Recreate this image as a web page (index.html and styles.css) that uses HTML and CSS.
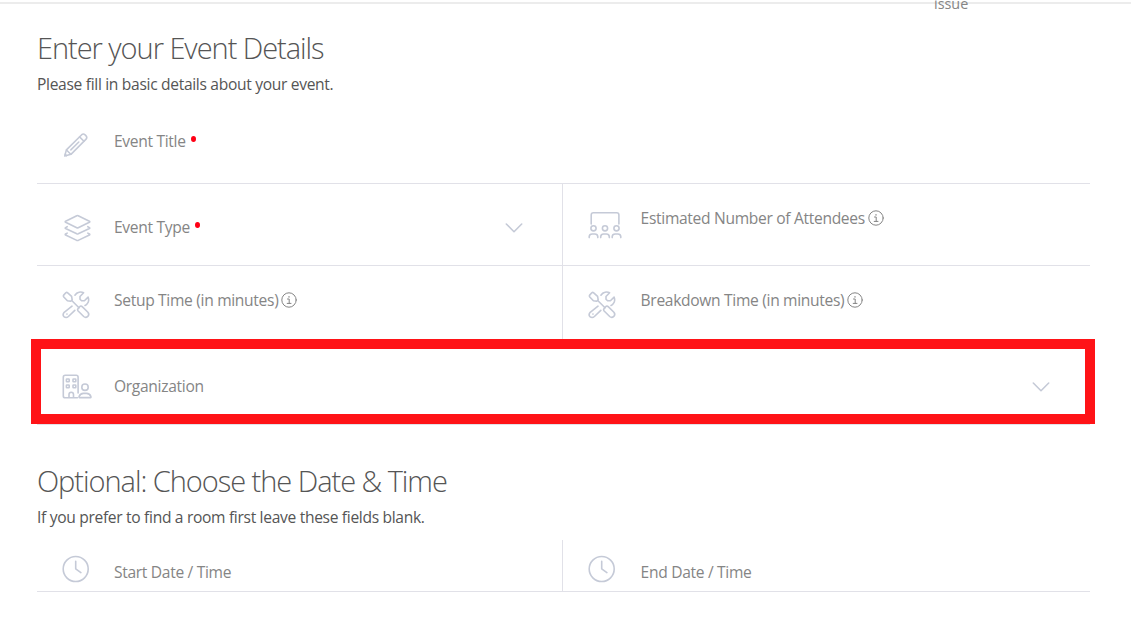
FILE: index.html
```html
<!DOCTYPE html>
<html lang="en">
<head>
  <meta charset="UTF-8" />
  <meta name="viewport" content="width=device-width, initial-scale=1.0" />
  <title>Event Details</title>
  <link rel="stylesheet" href="styles.css">
</head>
<body>
  <!-- shared icons -->
  <svg class="sprite" width="0" height="0">
    <symbol id="tools" viewBox="0.6 0 34 32">
      <path d="M2.5 4.9 4.4 2.8Q5.3 2 6.3 2.8L10.2 6.4 10.8 9.8 9.3 11.3 6 10.8 2.4 7Q1.6 5.9 2.5 4.9Z" />
      <path d="M10.3 10.5 17.6 17.8" />
      <path d="M17 18.1 18.8 16.3Q19.8 15.7 20.8 16.6L26.5 22.3Q28.3 24.4 26.4 26.4 24.3 28.3 22.3 26.5L16.5 20.8Q15.6 19.5 17 18.1Z" />
      <path d="M10.6 16.2 2.8 22.3Q.8 24.5 2.5 26.6 4.8 28.5 7 26.5L13.4 20.4" />
      <path d="M13.5 5.2Q15.2 2.7 17.5 2.2 20 1.5 22.2 2.7L18.6 6.5V9.2L20.2 10.8H23L26.7 7.1Q28.2 11 25.8 13.8 24.8 15 23.6 15.5" />
      <path d="M5.5 24.1h.1" />
    </symbol>
    <symbol id="clock" viewBox="0.3 0 34 32">
      <circle cx="14" cy="15" r="12.5" />
      <path d="M14 7.3V14.8L19.2 18.6" />
    </symbol>
    <symbol id="info" viewBox="0 0 16 16">
      <circle cx="8" cy="8" r="7.2" />
      <path d="M6.5 7H8.2V11.4M6.2 11.4H10M8 4.4V5.3" />
    </symbol>
    <symbol id="chevron" viewBox="0 0 18 12">
      <path d="M1.3 2 9 9.7 16.7 2" />
    </symbol>
  </svg>

  <header class="topbar">
    <span class="topbar-link">issue</span>
  </header>

  <main class="container">
    <section class="details">
      <h1>Enter your Event Details</h1>
      <p class="intro">Please fill in basic details about your event.</p>

      <div class="row row-title">
        <div class="field">
          <svg class="icon" viewBox="0.2 0.2 35 33">
            <path d="M3 26 4.7 19.7 20.5 4Q22.2 2.5 24 4.2L24.8 5Q26.6 6.8 25 8.6L9.4 24.3Z" />
            <path d="M4.8 19.8 9.2 24.2M18.3 6.3 22.8 10.7M9.3 19.7 17.5 11.6M3.4 24.2 4.8 25.6" />
          </svg>
          <label>Event Title <span class="required"></span></label>
        </div>
      </div>

      <div class="row row-type">
        <div class="field field-select">
          <svg class="icon" viewBox="0 -0.6 34 32">
            <path d="M3.6 7.6 14.8 2.1Q15.5 1.8 16.2 2.1L27.4 7.6Q28.2 8.1 27.4 8.6L16.2 14.1Q15.5 14.4 14.8 14.1L3.6 8.6Q2.8 8.1 3.6 7.6Z" />
            <path d="M5.2 13.1 3.6 14Q2.8 14.5 3.6 15L14.8 20.2Q15.5 20.5 16.2 20.2L27.4 15Q28.2 14.5 27.4 14L25.8 13.1" />
            <path d="M5.2 19.5 3.6 20.4Q2.8 20.9 3.6 21.4L14.8 26.8Q15.5 27.1 16.2 26.8L27.4 21.4Q28.2 20.9 27.4 20.4L25.8 19.5" />
          </svg>
          <label>Event Type <span class="required"></span></label>
          <svg class="chevron"><use href="#chevron" /></svg>
        </div>
        <div class="field">
          <svg class="icon icon-people" viewBox="0.5 0 34 32">
            <path d="M3.7 13V4Q3.7 1.8 5.9 1.8H29.2Q31.4 1.8 31.4 4V13" />
            <circle cx="6" cy="17.3" r="2.6" />
            <circle cx="17.5" cy="17.3" r="2.6" />
            <circle cx="29" cy="17.3" r="2.6" />
            <path d="M1.7 26.6V25.6Q2 23 4.6 23H7.4Q10 23 10.3 25.6V26.6M13.2 26.6V25.6Q13.5 23 16.1 23H18.9Q21.5 23 21.8 25.6V26.6M24.7 26.6V25.6Q25 23 27.6 23H30.4Q33 23 33.3 25.6V26.6" />
          </svg>
          <label>Estimated Number of Attendees <svg class="info"><use href="#info" /></svg></label>
        </div>
      </div>

      <div class="row row-time">
        <div class="field">
          <svg class="icon"><use href="#tools" /></svg>
          <label>Setup Time (in minutes) <svg class="info"><use href="#info" /></svg></label>
        </div>
        <div class="field">
          <svg class="icon"><use href="#tools" /></svg>
          <label>Breakdown Time (in minutes) <svg class="info"><use href="#info" /></svg></label>
        </div>
      </div>

      <div class="highlight">
        <div class="field field-select">
          <svg class="icon" viewBox="0 0 34 32">
            <path d="M15.4 24.8H3.2Q1.3 24.8 1.3 22.9V4.2Q1.3 2.3 3.2 2.3H14.2Q16.1 2.3 16.1 4.2V20M7 24.6V21.6Q7 19.2 9.2 19.2 11.5 19.2 11.5 21.6V24.6" />
            <rect x="4.4" y="6" width="2.8" height="2.8" rx=".5" />
            <rect x="11" y="6" width="2.8" height="2.8" rx=".5" />
            <rect x="4.4" y="12" width="2.8" height="2.8" rx=".5" />
            <rect x="11" y="12" width="2.8" height="2.8" rx=".5" />
            <circle cx="23" cy="14.2" r="3.2" />
            <path d="M17.5 24.6Q16.9 24.6 17.1 23.6 18.2 20.4 21.4 20.4H24.6Q27.8 20.4 28.9 23.6 29.1 24.6 28.5 24.6Z" />
          </svg>
          <label>Organization</label>
          <svg class="chevron"><use href="#chevron" /></svg>
        </div>
      </div>
      <div class="underline"></div>
    </section>

    <section class="schedule">
      <h2>Optional: Choose the Date &amp; Time</h2>
      <p class="intro">If you prefer to find a room first leave these fields blank.</p>

      <div class="row row-date">
        <div class="field">
          <svg class="icon"><use href="#clock" /></svg>
          <label>Start Date / Time</label>
        </div>
        <div class="field">
          <svg class="icon"><use href="#clock" /></svg>
          <label>End Date / Time</label>
        </div>
      </div>
    </section>
  </main>
</body>
</html>
```
FILE: styles.css
```css
* {
  box-sizing: border-box;
}

body {
  font-family: 'Open Sans', sans-serif;
  margin: 0;
  background-color: #fff;
  color: #555;
  font-size: 15.6px;
  line-height: 20px;
  letter-spacing: -0.32px;
  overflow: hidden;
}

.sprite {
  display: block;
}

.topbar {
  height: 4px;
  border-bottom: 2px solid #ececec;
  display: flex;
  align-items: flex-end;
  padding-left: 934px;
}

.topbar-link {
  font-size: 14.4px;
  letter-spacing: 0;
  color: #858585;
  margin-bottom: -12px;
}

.container {
  width: 1053px;
  margin-left: 37px;
  padding-top: 24px;
}

h1, h2 {
  margin: 0;
  font-size: 29px;
  font-weight: 300;
  line-height: 40px;
  letter-spacing: -1.04px;
}

.intro {
  margin: 6px 0 0;
}

.row {
  display: grid;
  grid-template-columns: 526px 1fr;
  border-bottom: 1px solid #e1e1e8;
}

.field {
  display: flex;
  align-items: flex-start;
  padding-left: 25px;
}

.row .field:first-child:not(:last-child) {
  border-right: 1px solid #e1e1e8;
}

.icon {
  width: 34px;
  height: 32px;
  margin-right: 18px;
  flex: none;
}

.field + .field .icon {
  margin-right: 18.6px;
}

svg {
  fill: none;
  stroke: #c5cad7;
  stroke-width: 1.6;
  stroke-linecap: round;
  stroke-linejoin: round;
}

label {
  color: #858585;
  display: flex;
  align-items: center;
}

.required {
  width: 5px;
  height: 6px;
  border-radius: 50%;
  background: #ff0015;
  margin: -5px 0 0 5px;
}

.info {
  width: 16px;
  height: 16px;
  margin-left: 3px;
  stroke: #858585;
  stroke-width: 1;
}

.chevron {
  width: 18px;
  height: 12px;
  margin-left: auto;
  margin-top: 5px;
}

.row-title {
  height: 80px;
  margin-top: 10px;
  padding-top: 27px;
}

.row-type {
  height: 82px;
}

.row-type .field {
  padding-top: 24px;
}

.row-type .icon {
  margin-top: 5px;
}

.row-type .field-select {
  padding-top: 33px;
  padding-right: 39px;
}

.row-type .field-select .icon {
  margin-top: -4px;
}

.row-type .icon-people {
  margin-top: 3px;
}

.row-time {
  height: 73px;
  border-bottom: none;
}

.row-time .field {
  padding-top: 24px;
}

/* box drawn round the organization field */
.highlight {
  height: 85px;
  margin: 0 -5px 0 -6px;
  border: 10px solid #ff1317;
}

.highlight .field {
  padding: 27px 35px 0 21px;
}

.highlight .icon {
  margin-top: -3px;
}

.underline {
  height: 1px;
  background: #e1e1e8;
}

.schedule {
  margin-top: 36px;
}

.row-date {
  height: 52px;
  margin-top: 13px;
}

.row-date .field {
  padding-top: 14px;
}

.row-date label {
  margin-top: 8px;
}
```
